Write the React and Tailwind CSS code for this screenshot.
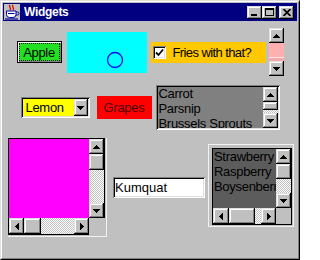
import React from 'react';

// Win95-ish bevels
const raised =
  'bg-[#c0c0c0] shadow-[inset_-1px_-1px_#000,inset_1px_1px_#dfdfdf,inset_-2px_-2px_#808080,inset_2px_2px_#fff]';
const sunken =
  'shadow-[inset_1px_1px_#808080,inset_-1px_-1px_#fff,inset_2px_2px_#000,inset_-2px_-2px_#dfdfdf]';
const dither =
  '[background-image:repeating-conic-gradient(#c0c0c0_0%_25%,#ffffff_0%_50%)] [background-size:2px_2px]';

const shapes = {
  up: { w: 7, h: 4, p: '3.5,0 7,4 0,4' },
  down: { w: 7, h: 4, p: '0,0 7,0 3.5,4' },
  left: { w: 4, h: 7, p: '4,0 4,7 0,3.5' },
  right: { w: 4, h: 7, p: '0,0 4,3.5 0,7' },
};

const Arrow = ({ dir }) => {
  const s = shapes[dir];
  return (
    <svg width={s.w} height={s.h} shapeRendering="crispEdges">
      <polygon points={s.p} fill="#000" />
    </svg>
  );
};

const ArrowButton = ({ dir, className = '' }) => (
  <div className={`flex items-center justify-center shrink-0 ${raised} ${className}`}>
    <Arrow dir={dir} />
  </div>
);

const JavaCup = () => (
  <svg width="16" height="16" viewBox="0 0 16 16">
    <rect x="0" y="0" width="16" height="16" fill="#c0c0c0" />
    <path d="M6 1 C4 2.5 8 3.5 6 6" stroke="#e00000" strokeWidth="1.3" fill="none" />
    <path d="M9 1 C7 2.5 11 3.5 9 6" stroke="#e00000" strokeWidth="1.3" fill="none" />
    <path d="M2.5 7 H12 V10.5 A3 3 0 0 1 9 13.5 H5.5 A3 3 0 0 1 2.5 10.5 Z" fill="#fff" stroke="#0000a0" strokeWidth="1" />
    <path d="M12 8 H13.5 A1.5 1.5 0 0 1 13.5 11 H12" fill="none" stroke="#0000a0" strokeWidth="1" />
    <path d="M4 9.5 H10.5" stroke="#0000a0" strokeWidth="1" />
    <path d="M1 15 H14" stroke="#0000a0" strokeWidth="1.2" />
  </svg>
);

const TitleButton = ({ children, className = '' }) => (
  <div className={`w-[15px] h-[13px] flex items-center justify-center ${raised} ${className}`}>{children}</div>
);

const TitleBar = () => (
  <div className="h-[18px] bg-[#000080] flex items-center pl-[1px] pr-[3px] shrink-0">
    <JavaCup />
    <span className="ml-[4px] text-white font-bold text-[12px] leading-none">Widgets</span>
    <div className="ml-auto flex items-center">
      <TitleButton>
        <svg width="7" height="7" shapeRendering="crispEdges">
          <rect x="0" y="5" width="6" height="2" fill="#000" />
        </svg>
      </TitleButton>
      <TitleButton>
        <svg width="9" height="8" shapeRendering="crispEdges">
          <rect x="0.5" y="0.5" width="8" height="7" fill="none" stroke="#000" />
          <rect x="0" y="0" width="9" height="2" fill="#000" />
        </svg>
      </TitleButton>
      <TitleButton className="ml-[2px]">
        <svg width="8" height="7">
          <path d="M0.5 0 L7.5 7 M7.5 0 L0.5 7" stroke="#000" strokeWidth="1.7" />
        </svg>
      </TitleButton>
    </div>
  </div>
);

export default function App() {
  return (
    <div className="w-[300px] h-[260px] bg-[#c0c0c0] font-['Liberation_Sans',Arial,sans-serif] text-black text-[13px] tracking-[-0.3px]">
      <div className="w-full h-full border border-t-[#dfdfdf] border-l-[#dfdfdf] border-r-black border-b-black">
        <div className="w-full h-full border border-t-white border-l-white border-r-[#808080] border-b-[#808080] p-[1px] flex flex-col">
          <TitleBar />

          {/* Row 1 */}
          <div className="mt-[7px] h-[48px] flex items-center justify-center">
            <div className="w-[45px] h-[22px] border border-black bg-[#22e022] shadow-[inset_1px_1px_#fff,inset_-1px_-1px_#808080] p-[1px]">
              <div className="w-full h-full border border-dotted border-black flex items-center justify-center leading-none">
                Apple
              </div>
            </div>
            <div className="ml-[5px] w-[80px] h-[41px] bg-[#00ffff]">
              <svg width="80" height="41">
                <circle cx="48" cy="28" r="7.5" fill="none" stroke="#1010f0" strokeWidth="1.3" />
              </svg>
            </div>
            <div className="ml-[4px] w-[115px] h-[21px] bg-[#ffc800] flex items-center pl-[2px]">
              <div className={`w-[13px] h-[13px] bg-white p-[2px] flex items-center justify-center ${sunken}`}>
                <svg width="9" height="9">
                  <path d="M1 4.5 L3.5 7 L8 1.5" stroke="#000" strokeWidth="1.8" fill="none" />
                </svg>
              </div>
              <span className="ml-[7px] tracking-[-0.6px] leading-none">Fries with that?</span>
            </div>
            <div className="ml-[3px] w-[15px] h-[48px] flex flex-col">
              <ArrowButton dir="up" className="h-[15px]" />
              <div className="h-[15px] bg-[#ffafaf] border-b border-[#ffe6e6]" />
              <div className="flex-1 bg-[#f4a8a8]" />
              <ArrowButton dir="down" className="h-[15px]" />
            </div>
          </div>

          {/* Row 2 */}
          <div className="mt-[8px] h-[47px] flex items-center justify-center">
            <div className={`w-[69px] h-[21px] p-[2px] flex ${sunken}`}>
              <div className="flex-1 bg-[#ffff00] flex items-center pl-[3px] leading-none">Lemon</div>
              <ArrowButton dir="down" className="w-[14px]" />
            </div>
            <div className="ml-[7px] w-[55px] h-[23px] bg-[#ff0000] text-[#4a0000] flex items-center justify-center leading-none">
              Grapes
            </div>
            <div className={`ml-[4px] w-[124px] h-[45px] p-[2px] flex ${sunken}`}>
              <div className="flex-1 bg-[#808080] pl-[1px] leading-[15px] overflow-hidden whitespace-nowrap">
                <div className="-mt-[1px]">Carrot</div>
                <div>Parsnip</div>
                <div>Brussels Sprouts</div>
              </div>
              <div className="w-[15px] flex flex-col">
                <ArrowButton dir="up" className="h-[15px]" />
                <div className={`h-[8px] ${raised}`} />
                <div className={`flex-1 ${dither}`} />
                <ArrowButton dir="down" className="h-[15px]" />
              </div>
            </div>
          </div>

          {/* Row 3 */}
          <div className="mt-[7px] h-[99px] flex items-center justify-center pl-[2px]">
            <div className="w-[99px] h-[99px] border-r border-b border-white/80 pr-[1px] pb-[1px]">
              <div className="w-[97px] h-[97px] grid grid-cols-[81px_16px] grid-rows-[80px_17px]">
                <div className="bg-[#ff00ff] border-l border-t border-black" />
                <div className="border-t border-r border-black flex flex-col">
                  <ArrowButton dir="up" className="h-[15px]" />
                  <div className={`h-[16px] shrink-0 ${raised}`} />
                  <div className={`flex-1 ${dither}`} />
                  <ArrowButton dir="down" className="h-[15px]" />
                </div>
                <div className="border-l border-b border-black flex">
                  <ArrowButton dir="left" className="w-[15px]" />
                  <div className={`w-[17px] shrink-0 ${raised}`} />
                  <div className={`flex-1 ${dither}`} />
                  <ArrowButton dir="right" className="w-[15px]" />
                </div>
                <div />
              </div>
            </div>

            <div className={`ml-[6px] w-[92px] h-[21px] p-[2px] bg-white flex items-center leading-none tracking-normal ${sunken}`}>
              Kumquat
            </div>

            <div className="ml-[3px] mb-[4px] w-[86px] h-[83px] border border-white/80 pl-[3px] pt-[3px]">
              <div className="w-[80px] h-[77px] border border-black grid grid-cols-[63px_15px] grid-rows-[59px_16px]">
                <div className="bg-[#5c5c5c] pl-[1px] leading-[15px] overflow-hidden whitespace-nowrap">
                  <div>Strawberry</div>
                  <div>Raspberry</div>
                  <div>Boysenberry</div>
                </div>
                <div className="flex flex-col">
                  <ArrowButton dir="up" className="h-[15px]" />
                  <div className={`h-[15px] shrink-0 ${raised}`} />
                  <div className={`flex-1 ${dither}`} />
                  <ArrowButton dir="down" className="h-[15px]" />
                </div>
                <div className="flex">
                  <ArrowButton dir="left" className="w-[16px]" />
                  <div className={`w-[26px] shrink-0 ${raised}`} />
                  <div className={`flex-1 ${dither}`} />
                  <ArrowButton dir="right" className="w-[15px]" />
                </div>
                <div />
              </div>
            </div>
          </div>
        </div>
      </div>
    </div>
  );
}
